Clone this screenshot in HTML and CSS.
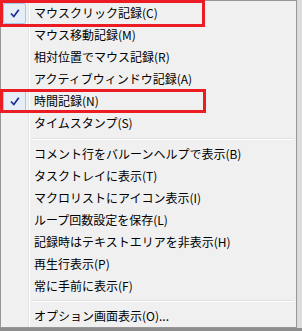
FILE: index.html
```html
<!DOCTYPE html>
<html>

<head>
    <title>Menu</title>
    <link rel="stylesheet" href="styles.css">
</head>

<body>
    <div class="menu">
        <ul class="items">
            <li class="item checked">
                <span class="gutter">
                    <svg width="10" height="9" viewBox="0 0 10 9"><path d="M1 4.5 L3.8 7.5 L8.8 0.8" fill="none" stroke="#1b2a8e" stroke-width="1.7"/></svg>
                </span>
                <span class="label">マウスクリック記録(C)</span>
            </li>
            <li class="item"><span class="gutter"></span><span class="label">マウス移動記録(M)</span></li>
            <li class="item"><span class="gutter"></span><span class="label">相対位置でマウス記録(R)</span></li>
            <li class="item"><span class="gutter"></span><span class="label">アクティブウィンドウ記録(A)</span></li>
            <li class="item checked">
                <span class="gutter">
                    <svg width="10" height="9" viewBox="0 0 10 9"><path d="M1 4.5 L3.8 7.5 L8.8 0.8" fill="none" stroke="#1b2a8e" stroke-width="1.7"/></svg>
                </span>
                <span class="label">時間記録(N)</span>
            </li>
            <li class="item"><span class="gutter"></span><span class="label">タイムスタンプ(S)</span></li>
            <li class="sep"></li>
            <li class="item"><span class="gutter"></span><span class="label">コメント行をバルーンヘルプで表示(B)</span></li>
            <li class="item"><span class="gutter"></span><span class="label">タスクトレイに表示(T)</span></li>
            <li class="item"><span class="gutter"></span><span class="label">マクロリストにアイコン表示(I)</span></li>
            <li class="item"><span class="gutter"></span><span class="label">ループ回数設定を保存(L)</span></li>
            <li class="item"><span class="gutter"></span><span class="label">記録時はテキストエリアを非表示(H)</span></li>
            <li class="item"><span class="gutter"></span><span class="label">再生行表示(P)</span></li>
            <li class="item"><span class="gutter"></span><span class="label">常に手前に表示(F)</span></li>
            <li class="sep sep-last"></li>
            <li class="item"><span class="gutter"></span><span class="label">オプション画面表示(O)...</span></li>
        </ul>

        <!-- red annotation boxes -->
        <div class="mark mark-1"></div>
        <div class="mark mark-2"></div>
    </div>
</body>

</html>
```

FILE: styles.css
```css
* {
    box-sizing: border-box;
}

body {
    margin: 0;
    height: 331px;
    background: linear-gradient(to bottom, #f0f0f0 0 328px, #8d8d8d 328px);
    font-family: "Noto Sans CJK JP", "Noto Sans", sans-serif;
    font-size: 12px;
    color: #000;
    overflow: hidden;
}

.menu {
    position: relative;
    width: 302px;
    border-right: 5px solid #dcdcdc;
}

.items {
    list-style: none;
    margin: 0;
    padding: 1px 0 0;
    border: 1px solid #979797;
    background: linear-gradient(to right, #f1f1f1 0 27px, #e2e3e3 27px 28px, #ffffff 28px 29px, #f0f0f0 29px);
}

.item {
    display: flex;
    align-items: center;
    height: 22px;
}

.gutter {
    width: 33px;
    height: 22px;
    display: flex;
    align-items: center;
    flex: none;
}

.checked .gutter {
    padding-left: 2px;
}

.checked .gutter svg {
    box-sizing: content-box;
    width: 10px;
    height: 9px;
    padding: 5px 5px 5px 6px;
    border: 1px solid #a9c7ea;
    border-radius: 2px;
    background: #e5edf7;
}

.label {
    white-space: nowrap;
    line-height: 22px;
}

.sep {
    height: 9px;
    margin-left: 30px;
    margin-right: 2px;
    background: linear-gradient(to bottom, transparent 4px, #e0e0e0 4px 5px, #ffffff 5px 6px, transparent 6px);
}

.sep-last {
    height: 8px;
    background: linear-gradient(to bottom, transparent 3px, #e0e0e0 3px 4px, #ffffff 4px 5px, transparent 5px);
}

.mark {
    position: absolute;
    left: 0;
    border: 3px solid #ec1c24;
}

.mark-1 {
    top: 0;
    width: 205px;
    height: 27px;
}

.mark-2 {
    top: 89px;
    width: 206px;
    height: 24px;
}
```
